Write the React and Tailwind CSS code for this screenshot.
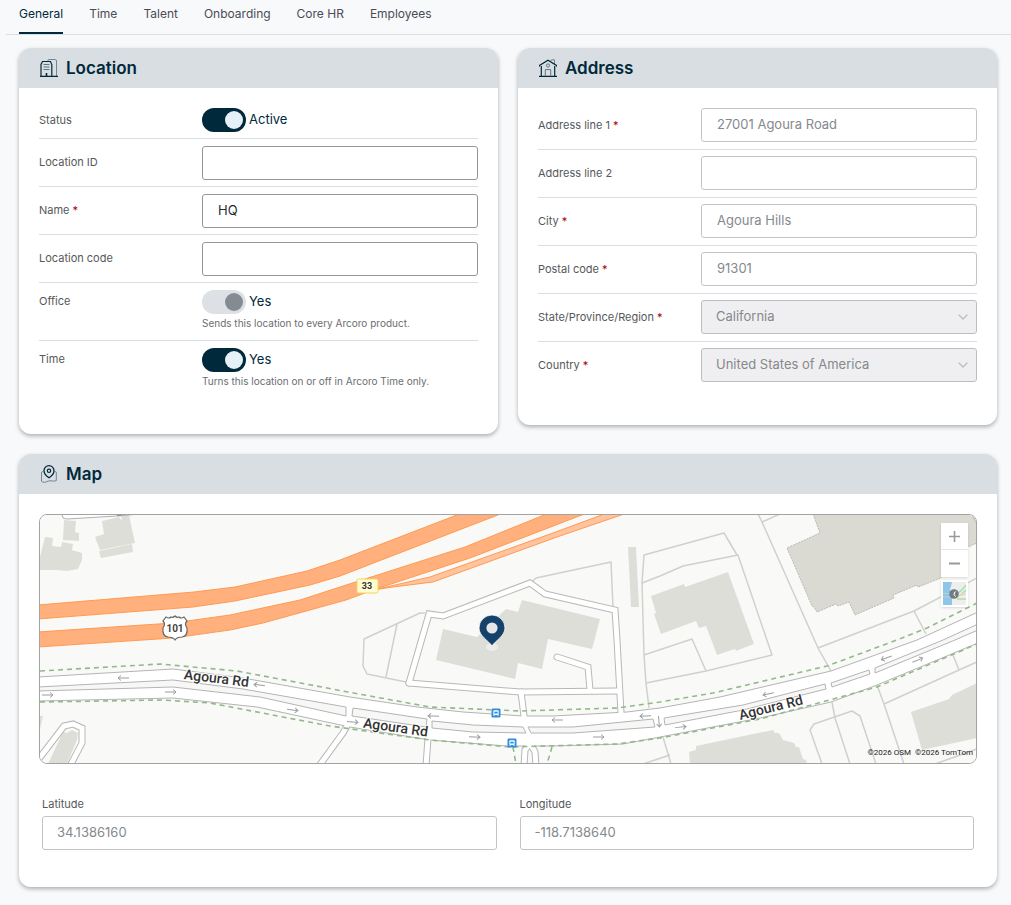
import React, { useState } from 'react';
import { ChevronDown } from 'lucide-react';

const TABS = ['General', 'Time', 'Talent', 'Onboarding', 'Core HR', 'Employees'];

function LocationIcon() {
  return (
    <svg width="18" height="18" viewBox="0 0 18 18" fill="none" stroke="#00293b" aria-hidden="true">
      <path d="M8 2V1.2Q8 .5 9 .5H15.2Q16.5 .7 16.5 2V17" stroke="#6f8793" />
      <path d="M1 17.5V5.5L2.5 2.5H10.5L11.8 5.5V17" strokeWidth="1.2" />
      <path d="M3.5 5.5H9.5M3.5 8H9.5M3.5 10.5H9.5" stroke="#5d7783" />
      <path d="M6.5 17V14" strokeWidth="1.6" />
      <path d="M0 17.4H18" strokeWidth="1.2" />
    </svg>
  );
}

function HouseIcon() {
  return (
    <svg width="18" height="18" viewBox="0 0 18 18" fill="none" stroke="#00293b" aria-hidden="true">
      <path d="M11.5 2.5L12.5 .8H15.5V5" stroke="#6f8793" />
      <path d="M.5 7.5V6.5L9 1.3L17.5 6.5V7.5" strokeWidth="1.2" />
      <path d="M2.3 7V17M15.7 7V17M0 17.4H18" strokeWidth="1.2" />
      <circle cx="9" cy="6.5" r="1.6" stroke="#5d7783" />
      <path d="M6.3 17V10.6H11.7V17" stroke="#5d7783" />
    </svg>
  );
}

function MapIcon() {
  return (
    <svg width="18" height="18" viewBox="0 0 18 18" fill="none" stroke="#00293b" aria-hidden="true">
      <path d="M3 6.5L1.5 7.3V16.3Q2.5 17.4 4.5 17.3Q6.5 17 8.5 16Q11 15.4 13.5 16.2L16.3 15.6V7L15 6.5" stroke="#6f8793" />
      <path d="M9 12.8C6 10.8 4 8.6 4 5.7A5 5 0 0 1 14 5.7C14 8.6 12 10.8 9 12.8Z" strokeWidth="1.3" />
      <circle cx="9" cy="5.8" r="1.7" strokeWidth="1.2" />
    </svg>
  );
}

function Card({ icon, title, children }) {
  return (
    <section className="overflow-hidden rounded-xl bg-white shadow-[0_2px_4px_rgba(0,0,0,0.3)]">
      <header className="flex h-10 items-center gap-2 bg-[#d9dee2] px-[21px]">
        {icon}
        <h2 className="text-[17px] leading-6 font-semibold text-[#00293b]">{title}</h2>
      </header>
      {children}
    </section>
  );
}

function FieldLabel({ htmlFor, required, children }) {
  return (
    <label htmlFor={htmlFor} className="block text-[11px] leading-4 text-[#56585a]">
      {children}
      {required && <span className="text-[#a80000]"> *</span>}
    </label>
  );
}

function LocationRow({ id, label, required, defaultValue }) {
  return (
    <div className="flex items-center border-b border-[#d9dee2] pt-[7px] pb-[6px]">
      <div className="w-[163px] shrink-0 pb-[2px]">
        <FieldLabel htmlFor={id} required={required}>{label}</FieldLabel>
      </div>
      <input
        id={id}
        defaultValue={defaultValue}
        className="h-[34px] min-w-0 flex-1 rounded-[3px] border border-[#93979b] bg-white px-[15px] pb-[2px] text-[13px] text-[#1f2d35]"
      />
    </div>
  );
}

function ToggleRow({ id, label, text, help, disabled, last }) {
  const [on, setOn] = useState(true);
  return (
    <div className={`flex items-start pt-[7px] ${last ? '' : 'border-b border-[#d9dee2]'} ${help ? 'pb-[9px]' : 'pb-[6px]'}`}>
      <div className={`w-[163px] shrink-0 ${help ? 'pt-[3px]' : 'pt-1'}`}>
        <FieldLabel htmlFor={id}>{label}</FieldLabel>
      </div>
      <div className="flex-1">
        <div className="flex h-6 items-center gap-[3px]">
          <input
            id={id}
            type="checkbox"
            checked={on}
            disabled={disabled}
            onChange={(e) => setOn(e.target.checked)}
            className="flex h-6 w-11 appearance-none items-center rounded-full bg-[#9aa3a9] px-[3px] before:size-[18px] before:rounded-full before:bg-[#e6f1f7] checked:justify-end checked:bg-[#00293b] disabled:bg-[#dde1e6] disabled:before:bg-[#858b93]"
          />
          <span className="pb-[2px] text-[13px] leading-5 text-[#00293b]">{text}</span>
        </div>
        {help && <p className="pt-px text-[10px] leading-4 text-[#6b6e70]">{help}</p>}
      </div>
    </div>
  );
}

function AddressRow({ id, label, required, value, select, last }) {
  return (
    <div className={`flex items-center pt-[6px] pb-[7px] ${last ? '' : 'border-b border-[#d9dee2]'}`}>
      <div className="w-[163px] shrink-0">
        <FieldLabel htmlFor={id} required={required}>{label}</FieldLabel>
      </div>
      {select ? (
        <div className="relative min-w-0 flex-1">
          <select
            id={id}
            disabled
            className="block h-[34px] w-full appearance-none rounded-[3px] border border-[#bcbfc2] bg-[#efeff1] px-[14px] text-[13px] text-[#85898d] opacity-100"
          >
            <option>{value}</option>
          </select>
          <ChevronDown size={16} strokeWidth={2} className="pointer-events-none absolute top-[9px] right-[6px] text-[#bcbfc2]" />
        </div>
      ) : (
        <input
          id={id}
          disabled
          defaultValue={value}
          className="h-[34px] min-w-0 flex-1 rounded-[3px] border border-[#c2c4c6] bg-white px-[15px] pb-[2px] text-[13px] text-[#85898d]"
        />
      )}
    </div>
  );
}

const BUILDINGS = [
  '45,537 53,538 52,546 61,547 62,542 73,544 72,550 82,553 82,560 78,569 67,571 56,570 40,570 40,557',
  '64,520 76,521 75,532 79,533 79,541 63,540',
  '102,521 119,517 122,521 121,515 129,515 135,543 100,550 95,537 104,534',
  '99,551 132,544 133,552 101,558',
  '443,629 477,637 506,609 518,612 522,600 600,619 592,649 548,639 542,669 518,663 515,679 436,660',
  '628,547 636,547 639,607 631,607',
  '651,596 684,584 685,587 728,572 754,644 736,651 735,649 717,655 706,626 699,628 696,621 661,634 654,614 656,613',
  '911,712 949,699 952,695 977,683 977,738 922,750',
  '689,752 696,750 696,746 773,730 775,733 779,733 783,740 794,743 796,747 799,747 803,759 806,760 807,764 690,764',
  '48,764 63,732 67,733 72,730 78,733 77,740 67,764',
  '40,716 43,716 40,729',
];

const PATHS = [
  '425,613 420,613 364,639 363,666 367,674 406,682',
  '397,624 386,677',
  '532,582 536,578 611,562 613,607',
  '737,555 724,533 644,555 642,583 644,655 646,683 649,708',
  '642,583 660,576 683,566 738,555 772,655 706,671 646,683',
  '644,655 692,639 706,671',
  '758,514 762,522 818,648 831,671',
  '762,522 780,514',
  '818,648 914,611 977,578',
  '914,611 926,634',
  '832,702 835,718 850,764',
  '822,764 810,730 814,724 852,711 860,716 876,764',
  '877,685 884,704 904,764',
  '884,704 959,670 977,662',
  '953,655 959,670',
  '663,737 671,764',
  '643,764 658,759 670,755',
  '935,764 977,749',
];

const SERVICE_ROADS = [
  '409,683 429,614 443,616 530,583 545,594 615,610 617,640 621,713',
  '409,683 520,692 618,691',
  '521,692 524,716 529,738',
  '590,690 588,667 557,657',
  '428,738 426,766',
  '347,726 343,733 319,766',
  '530,743 525,750 524,766',
  '530,743 535,752 536,766',
  '38,760 64,726 73,724 82,728 82,743 70,766',
];

const MEDIANS = [
  '38,687 173,680 243,689 346,707 346,716 260,697 173,687 38,691',
  '353,708 427,719 426,727 352,716',
  '432,721 473,725 523,727 526,733 473,732 432,728',
  '528,727 573,727 653,719 655,727 573,733 531,733',
  '664,718 743,705 825,684 826,689 743,710 665,725',
  '831,683 869,670 870,674 832,687',
  '875,668 943,640 978,624 978,630 955,640 875,673',
];

const ARROWS = [
  [123, 678, 180], [48, 695, 0], [171, 692, 0], [259, 685, 188], [293, 710, 8], [353, 722, 5],
  [433, 716, 183], [557, 720, 180], [645, 716, 178], [475, 737, 2], [599, 737, 0], [659, 722, 85],
  [681, 727, -6], [768, 694, 168], [886, 658, 160], [918, 660, -22],
];

const ROAD_LABELS = [
  [216, 683, 7],
  [395, 732, 8],
  [772, 712, -14],
];

function BusStop({ x, y }) {
  return (
    <g transform={`translate(${x} ${y})`}>
      <rect x="-4.5" y="-4.5" width="9" height="9" rx="1.2" fill="#2e8fdf" />
      <rect x="-2.7" y="-2.8" width="5.4" height="4.8" rx="0.8" fill="#fff" />
      <rect x="-1.7" y="-1.3" width="3.4" height="1.8" fill="#2e8fdf" />
      <path d="M-2 2V3M2 2V3" stroke="#fff" />
    </g>
  );
}

function StreetMap() {
  return (
    <svg
      viewBox="40 515 936 248"
      preserveAspectRatio="xMidYMid slice"
      className="block size-full bg-[#f9f9f7]"
      role="img"
      aria-label="Map"
    >
      <g fill="#deded9">
        {BUILDINGS.map((points) => <polygon key={points} points={points} />)}
      </g>
      <polygon
        points="813,514 820,533 787,548 812,606 814,607 817,612 836,604 838,606 849,602 855,615 894,598 893,595 917,585 918,587 941,578 955,560 968,547 977,543 977,514"
        fill="#dadad3"
        stroke="#b9b9b3"
        strokeDasharray="2 1"
      />
      <path d="M972 514L978 526V514Z" fill="#fff" stroke="#aaa" />
      <path d="M62 514L63 518L67 519L117 516L140 514" fill="#fff" stroke="#b0b0b0" />
      <path d="M117 515H121" stroke="#555" />

      <g fill="none" stroke="#d0d0ce" strokeWidth="1.5" strokeLinejoin="round">
        {PATHS.map((points) => <polyline key={points} points={points} />)}
      </g>

      {/* freeways and off-ramp */}
      <g fill="#ffb07c" stroke="#ff9a52">
        <path d="M373 590L430 577L553 533L607 513H627L557 537L433 582L393 587Z" fill="#ffc49d" />
        <path d="M38 605L194 592L235 587L307 571L340 560L462 513H503L340 576L310 585L235 601L193 607L38 619Z" />
        <path d="M38 632L173 623L230 615L300 600L340 587L465 547L549 513H587L470 558L373 590L346 600L263 623L230 630L173 638L38 647Z" />
      </g>

      {/* service roads: casing first, then the white surface */}
      <g fill="none" stroke="#b8b8b8" strokeWidth="7" strokeLinecap="round">
        {SERVICE_ROADS.map((points) => <polyline key={points} points={points} />)}
      </g>
      <path
        d="M38 677L173 669L243 678L350 697L417 707L463 712L523 716H553L627 712L660 708L720 697L831 671L917 640L978 612V643L877 685L831 702L760 718L660 737L623 744L550 746H507L430 740L350 727L257 707L173 698L38 701Z"
        fill="#fff"
        stroke="#b4b4b4"
      />
      <g fill="none" stroke="#fff" strokeWidth="5" strokeLinecap="round">
        {SERVICE_ROADS.map((points) => <polyline key={points} points={points} />)}
      </g>
      <g fill="#f7f7f5" stroke="#b4b4b4">
        {MEDIANS.map((points) => <polygon key={points} points={points} />)}
      </g>

      <g fill="none" stroke="#93b98b" strokeWidth="1.6" strokeDasharray="5 4">
        <polyline points="40,671 160,664 237,671 348,692 430,707 520,711 617,708 660,702 713,693 827,666 897,640 927,628 977,603" />
        <polyline points="40,702 163,700 210,703 330,726 430,740 510,747 617,744 660,738 760,719 877,687 977,644" />
        <polyline points="513,747 516,764" />
        <polyline points="552,747 547,764" />
      </g>

      <g fill="none" stroke="#9aa0a0">
        {ARROWS.map(([x, y, angle]) => (
          <path key={`${x}-${y}`} d="M-6 0H5M2 -2.5L5 0L2 2.5" transform={`translate(${x} ${y}) rotate(${angle})`} />
        ))}
      </g>

      <g
        className="font-[Roboto]"
        fontSize="14"
        fontWeight="500"
        fill="#333"
        stroke="#fff"
        strokeWidth="2"
        paintOrder="stroke"
        textAnchor="middle"
      >
        {ROAD_LABELS.map(([x, y, angle]) => (
          <text key={x} transform={`translate(${x} ${y}) rotate(${angle})`}>Agoura Rd</text>
        ))}
      </g>

      <path
        d="M166 617Q169 619 171 617Q173 618 175 616Q177 618 179 617Q181 619 184 617L187 621Q184 624 187 628Q188 636 182 637Q177 637 175 640Q173 637 168 637Q162 636 163 628Q166 624 163 621Z"
        fill="#fff"
        stroke="#666"
        strokeWidth="1.2"
      />
      <text x="175" y="632" textAnchor="middle" className="font-[Roboto]" fontSize="10" fontWeight="700" fill="#444">101</text>
      <rect x="357" y="579" width="21" height="14" rx="1.5" fill="#fffcd2" stroke="#efd75e" />
      <text x="367" y="589" textAnchor="middle" className="font-[Roboto]" fontSize="9" fontWeight="700" fill="#333">33</text>

      <BusStop x={496} y={713} />
      <BusStop x={512} y={743} />

      <ellipse cx="492" cy="647" rx="6" ry="4" fill="#ecece9" />
      <path
        d="M492 646C489 641 479 636 479 628A13 13 0 0 1 505 628C505 636 495 641 492 646Z"
        fill="#14426a"
        stroke="#fff"
        strokeWidth="0.8"
      />
      <circle cx="492" cy="628" r="5.6" fill="#e6e6e6" />
    </svg>
  );
}

function MapControls() {
  return (
    <div className="absolute top-2 right-2 flex w-[27px] flex-col">
      <div className="flex flex-col bg-white shadow-sm">
        <button type="button" aria-label="Zoom in" className="flex h-[27px] items-center justify-center border-b border-[#e4e4e4]">
          <svg width="11" height="11" viewBox="0 0 11 11" stroke="#97999b" strokeWidth="1.6"><path d="M0 5.5H11M5.5 0V11" /></svg>
        </button>
        <button type="button" aria-label="Zoom out" className="flex h-[27px] items-center justify-center">
          <svg width="11" height="11" viewBox="0 0 11 11" stroke="#97999b" strokeWidth="2"><path d="M0 5.5H11" /></svg>
        </button>
      </div>
      <button type="button" aria-label="Map style" className="mt-[3px] bg-white p-[2px] shadow-sm">
        <svg viewBox="0 0 23 23" className="block w-full">
          <rect width="23" height="23" fill="#eeeeed" />
          <path d="M0 0H9L7 8L9 14V23H0Z" fill="#8dc6e6" />
          <path d="M0 11.5H9M0 15H8" stroke="#b9cfdb" />
          <path d="M13 12Q18 10 23 3M14 15Q19 13 23 8M14 17H23" stroke="#a9e0b0" strokeWidth="1.5" fill="none" />
          <path d="M14 14Q19 13 23 12" stroke="#f5d3c2" strokeWidth="1.5" fill="none" />
          <circle cx="11" cy="12" r="3.6" fill="#737b80" stroke="#737b80" strokeWidth="2.4" />
          <path d="M12.5 9.5A2.8 2.8 0 0 0 12.5 14.5L11 12.5Z" fill="#fff" stroke="#fff" strokeWidth="0.6" />
        </svg>
      </button>
    </div>
  );
}

function Coordinate({ id, label, value }) {
  return (
    <div>
      <FieldLabel htmlFor={id}>{label}</FieldLabel>
      <input
        id={id}
        disabled
        defaultValue={value}
        className="mt-1 block h-[34px] w-full rounded-[3px] border border-[#c2c4c6] bg-white px-[14px] pb-[2px] text-[13px] text-[#85898d]"
      />
    </div>
  );
}

export default function App() {
  const [active, setActive] = useState('General');

  return (
    <div className="min-h-screen bg-[#f8f9fb] font-[Inter,sans-serif]">
      <nav className="ml-[6px] flex gap-[26px] border-b border-[#dcdfe2] pl-[13px]">
        {TABS.map((tab) => (
          <a
            key={tab}
            href={`#${tab.toLowerCase().replace(' ', '-')}`}
            onClick={() => setActive(tab)}
            className={`border-b-2 pt-[6px] pb-[10px] text-xs leading-4 ${
              active === tab ? 'border-[#00293b] text-[#00293b]' : 'border-transparent text-[#4b4b55]'
            }`}
          >
            {tab}
          </a>
        ))}
      </nav>

      <main className="flex flex-col gap-5 pt-[13px] pr-[14px] pb-[18px] pl-[19px]">
        <div className="grid grid-cols-2 items-start gap-5">
          <Card icon={<LocationIcon />} title="Location">
            <div className="px-5 pt-[13px] pb-9">
              <ToggleRow id="status" label="Status" text="Active" />
              <LocationRow id="location-id" label="Location ID" />
              <LocationRow id="name" label="Name" required defaultValue="HQ" />
              <LocationRow id="location-code" label="Location code" />
              <ToggleRow id="office" label="Office" text="Yes" help="Sends this location to every Arcoro product." disabled />
              <ToggleRow id="time" label="Time" text="Yes" help="Turns this location on or off in Arcoro Time only." last />
            </div>
          </Card>

          <Card icon={<HouseIcon />} title="Address">
            <div className="px-5 pt-[14px] pb-9">
              <AddressRow id="address-1" label="Address line 1" required value="27001 Agoura Road" />
              <AddressRow id="address-2" label="Address line 2" />
              <AddressRow id="city" label="City" required value="Agoura Hills" />
              <AddressRow id="postal-code" label="Postal code" required value="91301" />
              <AddressRow id="state" label="State/Province/Region" required value="California" select />
              <AddressRow id="country" label="Country" required value="United States of America" select last />
            </div>
          </Card>
        </div>

        <Card icon={<MapIcon />} title="Map">
          <div className="px-5 pt-5 pb-[37px]">
            <div className="relative h-[250px] overflow-hidden rounded-lg border border-[#a3a3a3]">
              <StreetMap />
              <MapControls />
              <p className="absolute right-[3px] bottom-1 font-[Roboto] text-[8px] leading-3 text-[#222]">
                ©2026 OSM&nbsp; ©2026 TomTom
              </p>
            </div>
            <div className="grid grid-cols-2 gap-[23px] px-[3px] pt-8">
              <Coordinate id="latitude" label="Latitude" value="34.1386160" />
              <Coordinate id="longitude" label="Longitude" value="-118.7138640" />
            </div>
          </div>
        </Card>
      </main>
    </div>
  );
}
